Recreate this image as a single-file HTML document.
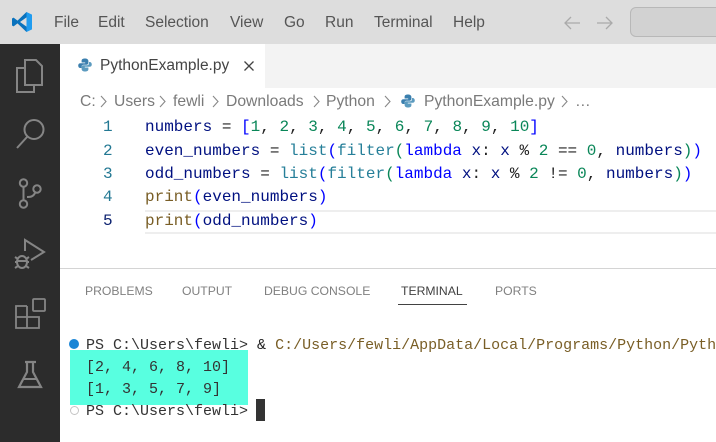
<!DOCTYPE html>
<html><head><meta charset="utf-8"><style>
html,body{margin:0;padding:0;width:716px;height:442px;overflow:hidden;background:#fff}
.a{position:absolute;white-space:pre}
.m{font-family:"Liberation Sans",sans-serif;font-size:15.5px;line-height:20px;color:#555;top:13px}
.c{font-family:"Liberation Mono",monospace;font-size:16px;line-height:24px;left:145px;color:#001080}
.n{font-family:"Liberation Mono",monospace;font-size:16px;line-height:24px;left:103px;color:#237893}
.t{font-family:"Liberation Mono",monospace;font-size:15px;line-height:22px;color:#333}
.b{font-family:"Liberation Sans",sans-serif;font-size:15.7px;line-height:20px;color:#7a7a7a;top:92px}
.p{font-family:"Liberation Sans",sans-serif;font-size:12.2px;line-height:16px;color:#808080;top:283px}
.k{color:#0000ff}.f{color:#795e26}.d{color:#098658}.o{color:#222}.g{color:#267f99}.y{color:#795e26}
</style></head><body>
<div class="a" style="left:0;top:0;width:716px;height:44px;background:#ddd"></div>
<div class="a" style="left:0;top:44px;width:60px;height:398px;background:#2c2c2c"></div>
<div class="a" style="left:60px;top:44px;width:656px;height:44px;background:#f3f3f3"></div>
<div class="a" style="left:60px;top:44px;width:205px;height:44px;background:#fff"></div>

<svg class="a" style="left:11px;top:11px" width="22" height="22" viewBox="0 0 22 22">
<path d="M15.5 1 L21 3.6 V18.4 L15.5 21 Z" fill="#1f9cf0"/>
<path d="M15.5 1 L6.5 9.6 L2.6 6.6 L1 7.5 V14.5 L2.6 15.4 L6.5 12.4 L15.5 21 V15.6 L9 11 L15.5 6.4 Z" fill="#0a72bd"/>
</svg>
<div class="a m" style="left:54px">File</div>
<div class="a m" style="left:98px">Edit</div>
<div class="a m" style="left:145px">Selection</div>
<div class="a m" style="left:230px">View</div>
<div class="a m" style="left:284px">Go</div>
<div class="a m" style="left:325px">Run</div>
<div class="a m" style="left:374px">Terminal</div>
<div class="a m" style="left:453px">Help</div>
<svg class="a" style="left:560px;top:12px" width="60" height="22" viewBox="0 0 60 22" fill="none" stroke="#aaa" stroke-width="1.3">
<path d="M20 11 H5 M11 5 L5 11 L11 17"/><path d="M37 11 H52 M46 5 L52 11 L46 17"/>
</svg>
<div class="a" style="left:630px;top:7px;width:100px;height:30px;box-sizing:border-box;background:#d2d2d2;border:1px solid #b8b8b8;border-radius:6px"></div>

<svg class="a" style="left:0;top:44px" width="60" height="398" viewBox="0 0 60 398" fill="none" stroke="#858585" stroke-width="2">
<path d="M25 16 H36 L42 22 V41 H25 Z"/><path d="M25 24 H17 V48 H34 V41"/>
<circle cx="34" cy="85.500" r="9.500"/><path d="M27 93 L17 104"/>
<circle cx="23.500" cy="139" r="3.700"/><circle cx="23.500" cy="160" r="3.700"/><circle cx="37" cy="145" r="3.700"/>
<path d="M23.500 143 V156 M35 149 C33 153 30 153 27 153"/>
<path d="M25 207 V196 L44 208 L31 216" stroke-width="2"/>
<ellipse cx="22" cy="218" rx="5" ry="6"/><path d="M15 213 L18 215 M15 218 H17 M15 224 L18 222 M29 213 L26 215 M29 218 H27 M29 224 L26 222 M17 217 H27"/>
<path d="M27 262 H16 V284 H39 V273 H16 M27 262 V284" stroke-width="1.800"/>
<rect x="33" y="255" width="12" height="12" rx="1" stroke-width="1.800"/>
<path d="M25 318 H36 M27 318 V328 L19 343 H41 L33 328 V318" stroke-width="2.200"/>
<path d="M24 335 H36"/>
</svg>

<svg class="a" style="left:78px;top:58px" width="14" height="14" viewBox="0 0 14 14">
<path d="M7 0.500 C4 0.500 3.600 1.800 3.600 3 V4.500 H7.200 V5.200 H2.400 C1 5.200 0.200 6.200 0.200 7.500 C0.200 9 1 10 2.400 10 H3.600 V8.500 C3.600 7.400 4.500 6.700 5.500 6.700 H8.700 C9.700 6.700 10.400 5.900 10.400 5 V3 C10.400 1.500 9 0.500 7 0.500Z" fill="#3b7fae"/>
<path d="M7 13.500 C10 13.500 10.400 12.200 10.400 11 V9.500 H6.800 V8.800 H11.600 C13 8.800 13.800 7.800 13.800 6.500 C13.800 5 13 4 11.600 4 H11 V5.500 C11 6.600 10 7.300 9 7.300 H5.300 C4.300 7.300 3.600 8.100 3.600 9 V11 C3.600 12.500 5 13.500 7 13.500Z" fill="#5c9bbf"/>
</svg>
<div class="a" style="left:100px;top:56px;font-family:'Liberation Sans',sans-serif;font-size:15.5px;line-height:20px;color:#444">PythonExample.py</div>
<svg class="a" style="left:243px;top:60px" width="12" height="12" viewBox="0 0 12 12" stroke="#444" stroke-width="1.300"><path d="M1.500 1.500 L10.500 10.500 M10.500 1.500 L1.500 10.500"/></svg>

<div class="a b" style="left:80px">C:</div>
<div class="a b" style="left:114px">Users</div>
<div class="a b" style="left:173px">fewli</div>
<div class="a b" style="left:226px">Downloads</div>
<div class="a b" style="left:326px">Python</div>
<div class="a b" style="left:424px">PythonExample.py</div>
<div class="a b" style="left:575px">…</div>
<svg class="a" style="left:0;top:94px" width="600" height="16" viewBox="0 0 600 16" fill="none" stroke="#888" stroke-width="1.100">
<path d="M101 2 L106 7.500 L101 13"/><path d="M160 2 L165 7.500 L160 13"/><path d="M213 2 L218 7.500 L213 13"/><path d="M314 2 L319 7.500 L314 13"/><path d="M385 2 L390 7.500 L385 13"/><path d="M562 2 L567 7.500 L562 13"/>
</svg>
<svg class="a" style="left:401px;top:94px" width="14" height="14" viewBox="0 0 14 14">
<path d="M7 0.500 C4 0.500 3.600 1.800 3.600 3 V4.500 H7.200 V5.200 H2.400 C1 5.200 0.200 6.200 0.200 7.500 C0.200 9 1 10 2.400 10 H3.600 V8.500 C3.600 7.400 4.500 6.700 5.500 6.700 H8.700 C9.700 6.700 10.400 5.900 10.400 5 V3 C10.400 1.500 9 0.500 7 0.500Z" fill="#3b7fae"/>
<path d="M7 13.500 C10 13.500 10.400 12.200 10.400 11 V9.500 H6.800 V8.800 H11.600 C13 8.800 13.800 7.800 13.800 6.500 C13.800 5 13 4 11.600 4 H11 V5.500 C11 6.600 10 7.300 9 7.300 H5.300 C4.300 7.300 3.600 8.100 3.600 9 V11 C3.600 12.500 5 13.500 7 13.500Z" fill="#5c9bbf"/>
</svg>

<div class="a" style="left:145px;top:210px;width:571px;height:24px;box-sizing:border-box;border-top:2px solid #eee;border-bottom:2px solid #eee"></div>
<div class="a n" style="top:115px">1</div>
<div class="a n" style="top:139px">2</div>
<div class="a n" style="top:162px">3</div>
<div class="a n" style="top:185px">4</div>
<div class="a n" style="top:209px;color:#0b216f">5</div>
<div class="a c" style="top:115px">numbers <span class="o">=</span> <span class="k">[</span><span class="d">1</span><span class="o">,</span> <span class="d">2</span><span class="o">,</span> <span class="d">3</span><span class="o">,</span> <span class="d">4</span><span class="o">,</span> <span class="d">5</span><span class="o">,</span> <span class="d">6</span><span class="o">,</span> <span class="d">7</span><span class="o">,</span> <span class="d">8</span><span class="o">,</span> <span class="d">9</span><span class="o">,</span> <span class="d">10</span><span class="k">]</span></div>
<div class="a c" style="top:139px">even_numbers <span class="o">=</span> <span class="g">list</span><span class="k">(</span><span class="g">filter</span><span class="d">(</span><span class="k">lambda</span> x<span class="o">:</span> x <span class="o">%</span> <span class="d">2</span> <span class="o">==</span> <span class="d">0</span><span class="o">,</span> numbers<span class="d">)</span><span class="k">)</span></div>
<div class="a c" style="top:162px">odd_numbers <span class="o">=</span> <span class="g">list</span><span class="k">(</span><span class="g">filter</span><span class="d">(</span><span class="k">lambda</span> x<span class="o">:</span> x <span class="o">%</span> <span class="d">2</span> <span class="o">!=</span> <span class="d">0</span><span class="o">,</span> numbers<span class="d">)</span><span class="k">)</span></div>
<div class="a c" style="top:185px"><span class="f">print</span><span class="k">(</span>even_numbers<span class="k">)</span></div>
<div class="a c" style="top:209px"><span class="f">print</span><span class="k">(</span>odd_numbers<span class="k">)</span></div>

<div class="a" style="left:60px;top:268px;width:656px;height:1px;background:#d4d4d4"></div>
<div class="a p" style="left:85px">PROBLEMS</div>
<div class="a p" style="left:182px">OUTPUT</div>
<div class="a p" style="left:264px">DEBUG CONSOLE</div>
<div class="a p" style="left:401px;color:#424242">TERMINAL</div>
<div class="a p" style="left:495px">PORTS</div>
<div class="a" style="left:398px;top:304px;width:69px;height:1px;background:#424242"></div>

<div class="a" style="left:70px;top:350px;width:178px;height:55px;background:#58ffe0"></div>
<div class="a" style="left:69px;top:339px;width:10px;height:10px;border-radius:50%;background:#1a85d6"></div>
<div class="a" style="left:70px;top:406px;width:9px;height:9px;box-sizing:border-box;border-radius:50%;border:1.500px solid #c4c4c4"></div>
<div class="a t" style="left:86px;top:335px">PS C:\Users\fewli&gt; <span style="color:#222">&amp;</span> <span style="color:#795e26">C:/Users/fewli/AppData/Local/Programs/Python/Python</span></div>
<div class="a t" style="left:86px;top:357px">[2, 4, 6, 8, 10]</div>
<div class="a t" style="left:86px;top:379px">[1, 3, 5, 7, 9]</div>
<div class="a t" style="left:86px;top:401px">PS C:\Users\fewli&gt;</div>
<div class="a" style="left:256px;top:399px;width:9px;height:22px;background:#333"></div>
</body></html>
